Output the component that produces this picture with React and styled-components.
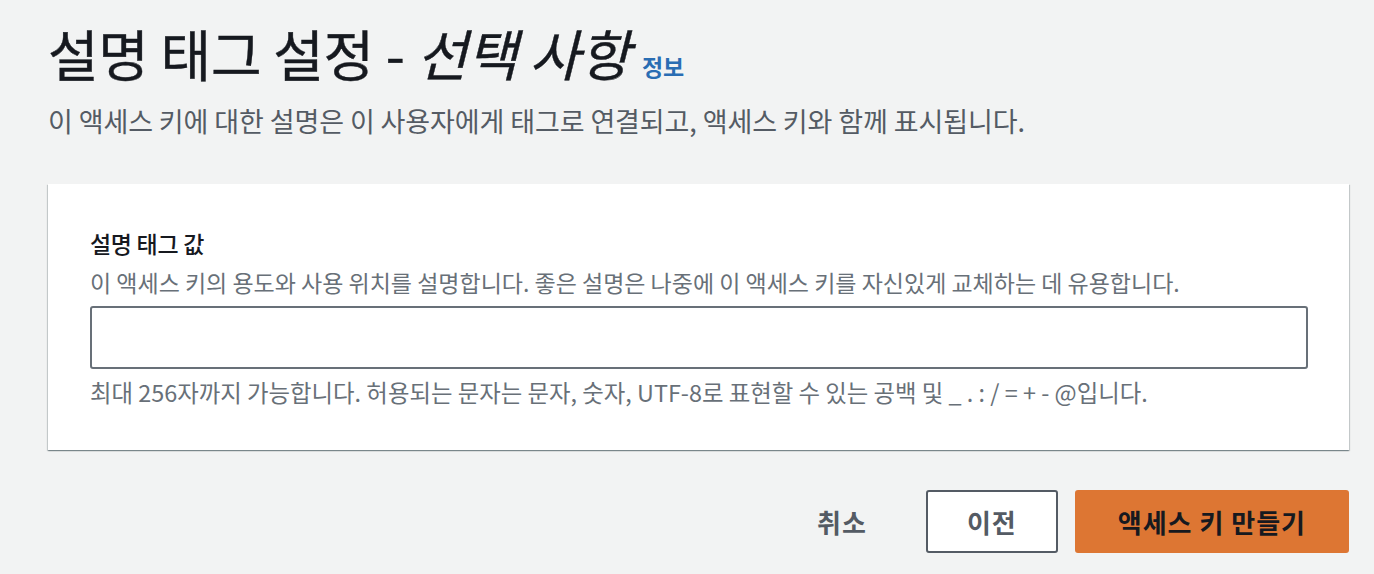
import React from 'react'
import styled, { createGlobalStyle } from 'styled-components'

const GlobalStyle = createGlobalStyle`
  html, body {
    margin: 0;
    background: #f2f3f3;
  }
  body {
    font-family: "Noto Sans CJK KR", "Noto Sans", sans-serif;
    color: #16191f;
  }
`

const Page = styled.div`
  padding: 17px 25px 0 48px;
  display: flex;
  flex-direction: column;
`

const TitleRow = styled.div`
  display: flex;
  align-items: baseline;
  gap: 12px;
`

const Title = styled.h1`
  margin: 0;
  font-size: 55px;
  font-weight: 400;
  letter-spacing: -0.3px;
  line-height: 70px;
  color: #16191f;
  -webkit-text-stroke: 0.4px #16191f;
  em {
    font-style: italic;
  }
`

const InfoLink = styled.a`
  font-size: 23px;
  font-weight: 700;
  color: #2a6db3;
  text-decoration: none;
`

const Subtitle = styled.p`
  margin: 16px 0 0;
  font-size: 27px;
  letter-spacing: -0.1px;
  line-height: 36px;
  color: #545b64;
`

const Card = styled.section`
  margin-top: 45px;
  background: #fff;
  box-shadow: 0 1px 1px 0 rgba(0, 28, 36, 0.3), 1px 1px 1px 0 rgba(0, 28, 36, 0.15), -1px 1px 1px 0 rgba(0, 28, 36, 0.15);
  padding: 43px 41px 43px 42px;
  display: flex;
  flex-direction: column;
`

const Label = styled.label`
  font-size: 23px;
  font-weight: 500;
  letter-spacing: -0.3px;
  line-height: 32px;
  color: #16191f;
`

const Hint = styled.div`
  font-size: ${p => p.$size || 23}px;
  line-height: 30px;
  color: #687078;
  margin-top: 8px;
`

const Input = styled.input`
  box-sizing: border-box;
  margin-top: 9px;
  height: 63px;
  width: 100%;
  border: 2px solid #687078;
  border-radius: 3px;
  background: #fff;
  outline: none;
`

const Actions = styled.div`
  margin-top: 40px;
  display: flex;
  justify-content: flex-end;
  align-items: center;
  gap: 17px;
`

const Button = styled.button`
  box-sizing: border-box;
  height: 63px;
  padding: 0 ${p => p.$pad}px;
  font-family: inherit;
  font-size: 26px;
  font-weight: 700;
  letter-spacing: 1px;
  border-radius: 3px;
  cursor: pointer;
  color: ${p => (p.$variant === 'primary' ? '#16191f' : '#545b64')};
  background: ${p => (p.$variant === 'primary' ? '#dd7633' : p.$variant === 'link' ? 'transparent' : '#fff')};
  border: 2px solid ${p => (p.$variant === 'primary' ? '#dd7633' : p.$variant === 'link' ? 'transparent' : '#545b64')};
`

export default function App() {
  return (
    <>
      <GlobalStyle />
      <Page>
        <TitleRow>
          <Title>설명 태그 설정 - <em>선택 사항</em></Title>
          <InfoLink href="#">정보</InfoLink>
        </TitleRow>
        <Subtitle>이 액세스 키에 대한 설명은 이 사용자에게 태그로 연결되고, 액세스 키와 함께 표시됩니다.</Subtitle>
        <Card>
          <Label>설명 태그 값</Label>
          <Hint>이 액세스 키의 용도와 사용 위치를 설명합니다. 좋은 설명은 나중에 이 액세스 키를 자신있게 교체하는 데 유용합니다.</Hint>
          <Input type="text" />
          <Hint $size={23.4}>최대 256자까지 가능합니다. 허용되는 문자는 문자, 숫자, UTF-8로 표현할 수 있는 공백 및 _ . : / = + - @입니다.</Hint>
        </Card>
        <Actions>
          <Button $variant="link" $pad={40}>취소</Button>
          <Button $pad={39}>이전</Button>
          <Button $variant="primary" $pad={41}>액세스 키 만들기</Button>
        </Actions>
      </Page>
    </>
  )
}
